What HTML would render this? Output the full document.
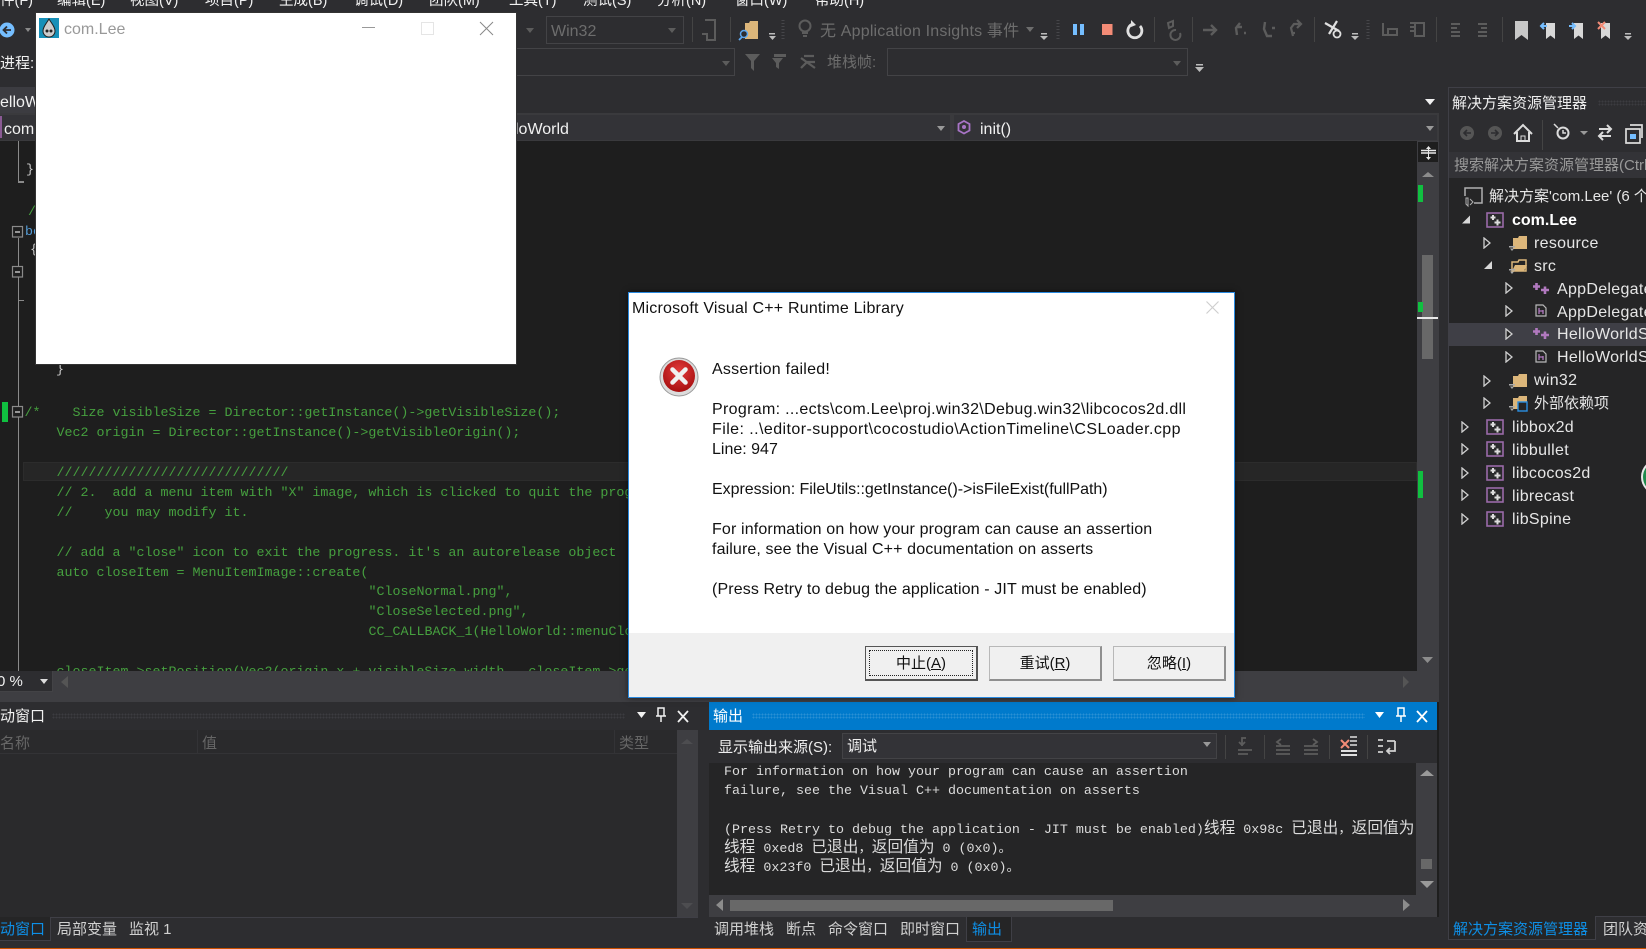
<!DOCTYPE html>
<html lang="zh"><head><meta charset="utf-8"><title>com.Lee</title>
<style>
html,body{margin:0;padding:0;background:#2d2d30;}
body{position:relative;width:1646px;height:949px;overflow:hidden;font-family:"Liberation Sans","Noto Sans CJK SC",sans-serif;color:#f1f1f1;font-size:16px;}
.a{position:absolute;}
.t{position:absolute;white-space:nowrap;line-height:20px;height:20px;}
.m{font-size:14.5px;}
.g{color:#6d6d6d;}
.code{position:absolute;left:24.5px;white-space:pre;font-family:"Liberation Mono","Noto Sans CJK SC",monospace;font-size:13.33px;line-height:20px;color:#46a03f;}
.out{position:absolute;left:724px;white-space:pre;font-family:"Liberation Mono","Noto Sans CJK SC",monospace;font-size:13.33px;line-height:19px;height:19px;color:#dcdcdc;}
.out b{font-weight:normal;font-family:"Noto Sans CJK SC",sans-serif;font-size:15.7px;line-height:1;}
.tr{position:absolute;white-space:nowrap;line-height:22px;height:22px;color:#e6e6e6;font-size:16px;letter-spacing:.3px;}
.dl{position:absolute;left:83px;white-space:nowrap;line-height:20px;color:#111;font-size:16px;}
.btn{position:absolute;top:353px;width:113px;height:35px;box-sizing:border-box;background:#f0f0f0;border:1px solid #b8b8b8;border-right:2px solid #8f8f8f;border-bottom:2px solid #8f8f8f;text-align:center;line-height:33px;color:#111;font-size:15px;}
</style></head><body>

<!-- menu -->
<div class="t m" style="left:0;top:-9px">件(F)</div>
<div class="t m" style="left:57px;top:-9px">编辑(E)</div>
<div class="t m" style="left:130px;top:-9px">视图(V)</div>
<div class="t m" style="left:205px;top:-9px">项目(P)</div>
<div class="t m" style="left:279px;top:-9px">生成(B)</div>
<div class="t m" style="left:354px;top:-9px">调试(D)</div>
<div class="t m" style="left:429px;top:-9px">团队(M)</div>
<div class="t m" style="left:509px;top:-9px">工具(T)</div>
<div class="t m" style="left:583px;top:-9px">测试(S)</div>
<div class="t m" style="left:657px;top:-9px">分析(N)</div>
<div class="t m" style="left:735px;top:-9px">窗口(W)</div>
<div class="t m" style="left:815px;top:-9px">帮助(H)</div>

<!-- toolbar -->
<div class="a" style="left:546px;top:16px;width:136px;height:26px;border:1px solid #434346"></div>
<div class="t g" style="left:551px;top:22px;">Win32</div>
<div class="t g" style="left:820px;top:22px;font-size:16px;letter-spacing:.18px">无 Application Insights 事件</div>
<div class="t" style="left:0;top:54px;color:#f1f1f1;font-size:15px">进程:</div>
<div class="a" style="left:516px;top:48px;width:218px;height:26px;border:1px solid #434346;border-left:0"></div>
<div class="t g" style="left:827px;top:53px;font-size:15px">堆栈帧:</div>
<div class="a" style="left:887px;top:48px;width:299px;height:26px;border:1px solid #434346"></div>

<!-- tab row / nav -->
<div class="a" style="left:0;top:87px;width:36px;height:26px;background:#3c3c41"></div>
<div class="t" style="left:0;top:93px;">elloW</div>
<div class="a" style="left:0;top:113px;width:1439px;height:28px;background:#3a3a3d"></div>
<div class="a" style="left:0;top:115px;width:950px;height:25px;background:#333337"></div>
<div class="a" style="left:954px;top:115px;width:483px;height:25px;background:#333337"></div>
<div class="a" style="left:0;top:116px;width:2px;height:22px;background:#8a5a94"></div>
<div class="t" style="left:4px;top:120px;">com</div>
<div class="t" style="left:515px;top:120px;">loWorld</div>
<div class="t" style="left:980px;top:120px;">init()</div>

<!-- editor -->
<div class="a" style="left:0;top:141px;width:1417px;height:530px;background:#1e1e1e;overflow:hidden">
  <div class="a" style="left:23px;top:321px;width:1394px;height:19px;background:#262626;border:1px solid #2c2c2c;box-sizing:border-box"></div>
  <div class="a" style="left:17.5px;top:0;width:1.5px;height:41px;background:#8a8a8a"></div>
  <div class="a" style="left:17.5px;top:40px;width:6px;height:1.5px;background:#8a8a8a"></div>
  <div class="a" style="left:17.5px;top:97px;width:1.5px;height:433px;background:#8a8a8a"></div>
  <div class="a" style="left:17.5px;top:159px;width:6px;height:1px;background:#8a8a8a"></div>
  <div class="a" style="left:2px;top:261px;width:6px;height:20px;background:#10c040"></div>
  <div class="code" style="left:26px;top:20px;color:#c8c8c8">}</div>
  <div class="code" style="left:28px;top:62px;">//</div>
  <div class="code" style="left:25px;top:82px;color:#569cd6">bool</div>
  <div class="code" style="left:30px;top:100px;color:#c8c8c8">{</div>
  <div class="code" style="left:56px;top:220px;color:#c8c8c8">}</div>
  <div class="code" style="top:263px;">/*    Size visibleSize = Director::getInstance()-&gt;getVisibleSize();</div>
  <div class="code" style="top:283px;">    Vec2 origin = Director::getInstance()-&gt;getVisibleOrigin();</div>
  <div class="code" style="top:323px;">    /////////////////////////////</div>
  <div class="code" style="top:343px;">    // 2.  add a menu item with "X" image, which is clicked to quit the program.</div>
  <div class="code" style="top:363px;">    //    you may modify it.</div>
  <div class="code" style="top:403px;">    // add a "close" icon to exit the progress. it's an autorelease object</div>
  <div class="code" style="top:423px;">    auto closeItem = MenuItemImage::create(</div>
  <div class="code" style="left:368.500px;top:442px;">"CloseNormal.png",</div>
  <div class="code" style="left:368.500px;top:462px;">"CloseSelected.png",</div>
  <div class="code" style="left:368.500px;top:482px;">CC_CALLBACK_1(HelloWorld::menuCloseCallback, this));</div>
  <div class="code" style="top:522px;">    closeItem-&gt;setPosition(Vec2(origin.x + visibleSize.width - closeItem-&gt;getContentSize().width/2 ,</div>
</div>

<!-- editor vscroll -->
<div class="a" style="left:1417px;top:141px;width:22px;height:530px;background:#3e3e42"></div>
<div class="a" style="left:1418px;top:142px;width:20px;height:20px;background:#1e1e1e"></div>
<div class="a" style="left:1422px;top:255px;width:11px;height:104px;background:#686868"></div>
<div class="a" style="left:1418px;top:185px;width:5px;height:17px;background:#10c040"></div>
<div class="a" style="left:1418px;top:302px;width:5px;height:10px;background:#10c040"></div>
<div class="a" style="left:1418px;top:471px;width:5px;height:27px;background:#10c040"></div>
<div class="a" style="left:1417px;top:317px;width:21px;height:2px;background:#e8e8e8"></div>

<!-- editor hscroll -->
<div class="a" style="left:0;top:671px;width:1439px;height:31px;background:#3e3e42"></div>
<div class="a" style="left:0;top:671px;width:52px;height:20px;background:#2d2d30;border-right:1px solid #434346;border-bottom:1px solid #434346"></div>
<div class="t" style="left:-3px;top:672px;font-size:15px">0 %</div>

<!-- left bottom panel -->
<div class="t" style="left:0;top:707px;font-size:15px">动窗口</div>
<div class="a" style="left:52px;top:713px;width:573px;height:6px;background-image:radial-gradient(#3c3c40 1px,transparent 1px);background-size:3px 3px"></div>
<div class="a" style="left:0;top:730px;width:677px;height:187px;background:#2a2a2c"></div>
<div class="a" style="left:0;top:753px;width:677px;height:1px;background:#333336"></div>
<div class="a" style="left:197px;top:730px;width:1px;height:24px;background:#333336"></div>
<div class="a" style="left:614px;top:730px;width:1px;height:24px;background:#333336"></div>
<div class="t" style="left:0;top:734px;color:#666;font-size:15px">名称</div>
<div class="t" style="left:202px;top:734px;color:#666;font-size:15px">值</div>
<div class="t" style="left:619px;top:734px;color:#666;font-size:15px">类型</div>
<div class="a" style="left:677px;top:730px;width:21px;height:187px;background:#3e3e42"></div>
<div class="a" style="left:0;top:917px;width:50px;height:23px;background:#252526;border-right:1px solid #3f3f46;border-bottom:1px solid #3f3f46"></div>
<div class="a" style="left:50px;top:917px;width:648px;height:1px;background:#3f3f46"></div>
<div class="t" style="left:0;top:920px;color:#0e8fe6;font-size:15px">动窗口</div>
<div class="t" style="left:57px;top:920px;color:#d0d0d0;font-size:15px">局部变量</div>
<div class="t" style="left:129px;top:920px;color:#d0d0d0;font-size:15px">监视 1</div>

<!-- output panel -->
<div class="a" style="left:709px;top:702px;width:728px;height:28px;background:#007acc"></div>
<div class="t" style="left:713px;top:707px;font-size:15px;color:#fff">输出</div>
<div class="a" style="left:752px;top:713px;width:613px;height:6px;background-image:radial-gradient(#2a90d4 1px,transparent 1px);background-size:3px 3px"></div>
<div class="t" style="left:718px;top:738px;font-size:15px;color:#eee">显示输出来源(S):</div>
<div class="a" style="left:842px;top:733px;width:373px;height:24px;background:#333337;border:1px solid #434346"></div>
<div class="t" style="left:847px;top:737px;font-size:15px;color:#eee">调试</div>
<div class="a" style="left:709px;top:763px;width:707px;height:132px;background:#252526;overflow:hidden">
  <div class="out" style="left:15px;top:0;">For information on how your program can cause an assertion</div>
  <div class="out" style="left:15px;top:19px;">failure, see the Visual C++ documentation on asserts</div>
  <div class="out" style="left:15px;top:56px;">(Press Retry to debug the application - JIT must be enabled)<b>线程</b> 0x98c <b>已退出</b>，<b>返回值为</b></div>
  <div class="out" style="left:15px;top:75px;"><b>线程</b> 0xed8 <b>已退出</b>，<b>返回值为</b> 0 (0x0)。</div>
  <div class="out" style="left:15px;top:94px;"><b>线程</b> 0x23f0 <b>已退出</b>，<b>返回值为</b> 0 (0x0)。</div>
</div>
<div class="a" style="left:1416px;top:763px;width:21px;height:132px;background:#3e3e42"></div>
<div class="a" style="left:1421px;top:859px;width:11px;height:10px;background:#686868"></div>
<div class="a" style="left:709px;top:895px;width:728px;height:22px;background:#3e3e42"></div>
<div class="a" style="left:730px;top:900px;width:383px;height:11px;background:#686868"></div>
<div class="a" style="left:1437px;top:702px;width:2px;height:215px;background:#1e1e1e"></div>
<div class="a" style="left:966px;top:917px;width:44px;height:24px;background:#252526;border:1px solid #3f3f46;border-top:0"></div>
<div class="t" style="left:714px;top:920px;font-size:15px;color:#d0d0d0">调用堆栈</div>
<div class="t" style="left:786px;top:920px;font-size:15px;color:#d0d0d0">断点</div>
<div class="t" style="left:828px;top:920px;font-size:15px;color:#d0d0d0">命令窗口</div>
<div class="t" style="left:900px;top:920px;font-size:15px;color:#d0d0d0">即时窗口</div>
<div class="t" style="left:972px;top:920px;font-size:15px;color:#0e8fe6">输出</div>

<!-- right panel -->
<div class="a" style="left:1448px;top:87px;width:198px;height:91px;background:#2d2d30;border-left:1px solid #3f3f46;border-top:1px solid #3f3f46;box-sizing:border-box"></div>
<div class="t" style="left:1452px;top:94px;font-size:15px;color:#eee">解决方案资源管理器</div>
<div class="a" style="left:1598px;top:100px;width:48px;height:6px;background-image:radial-gradient(#3c3c40 1px,transparent 1px);background-size:3px 3px"></div>
<div class="a" style="left:1449px;top:152px;width:197px;height:26px;background:#333337;overflow:hidden"><div class="t" style="left:5px;top:4px;color:#999;font-size:15px">搜索解决方案资源管理器(Ctrl+;)</div></div>
<div class="a" style="left:1448px;top:178px;width:198px;height:738px;background:#252526;border-left:1px solid #3f3f46;box-sizing:border-box"></div>
<div class="a" style="left:1449px;top:323px;width:197px;height:23px;background:#3f3f46"></div>
<div class="a" style="left:1448px;top:916px;width:148px;height:24px;background:#252526;border:1px solid #3f3f46;border-top:0;box-sizing:border-box"></div>
<div class="a" style="left:1596px;top:916px;width:50px;height:1px;background:#3f3f46"></div>
<div class="t" style="left:1453px;top:920px;font-size:15px;color:#0e8fe6">解决方案资源管理器</div>
<div class="t" style="left:1603px;top:920px;font-size:15px;color:#d0d0d0">团队资源管理器</div>

<div class="a" style="left:1449px;top:178px;width:197px;height:360px;overflow:hidden">
  <div class="tr" style="left:40px;top:8px;font-size:15px;letter-spacing:0">解决方案'com.Lee' (6 个项目)</div>
  <div class="tr" style="left:63px;top:32px;font-weight:bold;color:#fff;letter-spacing:0">com.Lee</div>
  <div class="tr" style="left:85px;top:55px;">resource</div>
  <div class="tr" style="left:85px;top:78px;">src</div>
  <div class="tr" style="left:108px;top:101px;">AppDelegate.cpp</div>
  <div class="tr" style="left:108px;top:124px;">AppDelegate.h</div>
  <div class="tr" style="left:108px;top:146px;">HelloWorldScene.cpp</div>
  <div class="tr" style="left:108px;top:169px;">HelloWorldScene.h</div>
  <div class="tr" style="left:85px;top:192px;">win32</div>
  <div class="tr" style="left:85px;top:215px;font-size:15px;letter-spacing:0">外部依赖项</div>
  <div class="tr" style="left:63px;top:239px;">libbox2d</div>
  <div class="tr" style="left:63px;top:262px;">libbullet</div>
  <div class="tr" style="left:63px;top:285px;">libcocos2d</div>
  <div class="tr" style="left:63px;top:308px;">librecast</div>
  <div class="tr" style="left:63px;top:331px;">libSpine</div>
</div>

<!-- status line -->
<div class="a" style="left:0;top:948px;width:1646px;height:1px;background:#ca5100"></div>

<!-- icons overlay -->
<svg class="a" style="left:0;top:0" width="1646" height="949" viewBox="0 0 1646 949">
<defs>
<symbol id="proj" viewBox="0 0 18 16"><rect x="1" y="1" width="16" height="14" fill="#2a2a2c" stroke="#9a6aa8" stroke-width="1.6"/><path d="M4.500 5.500h5M7 3v5M8.500 10.500h6M11.500 7.500v6" stroke="#ddd" stroke-width="2" fill="none"/></symbol>
<symbol id="fold" viewBox="0 0 18 16"><path d="M4 3h5l1-2h8v13H4z" fill="#dcb67a"/><path d="M0 11h6v1.500H0zM1 13.500h4L3 16z" fill="#aaa"/></symbol>
<symbol id="foldo" viewBox="0 0 18 16"><path d="M3 4h6l1-2h7v11H3z" fill="none" stroke="#dcb67a" stroke-width="1.500"/><path d="M3 13l3-6h12l-3 6z" fill="#dcb67a"/><path d="M0 11h6v1.500H0zM1 13.500h4L3 16z" fill="#aaa"/></symbol>
<symbol id="tri" viewBox="0 0 8 12"><path d="M1 1l6 5-6 5z" fill="#252526" stroke="#d0d0d0" stroke-width="1.300"/></symbol>
<symbol id="cpp" viewBox="0 0 16 12"><path d="M0 3.500h7M3.500 0v7M8 7h8M12 3.500v7.500" stroke="#b179bf" stroke-width="2.600" fill="none"/></symbol>
<symbol id="hdr" viewBox="0 0 12 13"><path d="M1 1h7l3 3v8H1z" fill="none" stroke="#b9b9b9" stroke-width="1.200"/><path d="M4 4v6M8 6v4M4 7h4" stroke="#b179bf" stroke-width="1.300" fill="none"/></symbol>
</defs>

<!-- toolbar row 1 -->
<circle cx="7" cy="30" r="7.500" fill="#75beff"/><path d="M11 30H4m3-3.500L3.500 30 7 33.500" stroke="#2d2d30" stroke-width="1.800" fill="none"/>
<path d="M25 28h6l-3 4z" fill="#8a8a8a"/>
<path d="M526 28h8l-4 5zM668 28h8l-4 5z" fill="#5c5c5c"/>
<path d="M692.500 17v25M730.500 17v25" stroke="#444" />
<path d="M705 20h10v20h-8v-6h-5" fill="none" stroke="#5c5c5c" stroke-width="2"/>
<path d="M745 23h4l1-2h8v18h-13z" fill="#dcb67a"/><circle cx="744" cy="34" r="3.500" fill="#2d2d30" stroke="#5ea8ef" stroke-width="1.500"/><path d="M742 37l-3 3" stroke="#5ea8ef" stroke-width="1.800"/>
<path d="M769 33h6v1.500h-6zM769 36h7l-3.500 4z" fill="#bcbcbc"/>
<path d="M783 20v19" stroke="#46464a" stroke-width="3" stroke-dasharray="1 2"/>
<circle cx="805" cy="26" r="5.500" fill="none" stroke="#5c5c5c" stroke-width="2"/><path d="M802 33h6M803 36h4" stroke="#5c5c5c" stroke-width="2"/>
<path d="M1026 27h8l-4 5z" fill="#6d6d6d"/>
<path d="M1041 33h6v1.500h-6zM1040 36h8l-4 4z" fill="#bcbcbc"/>
<path d="M1058 20v19" stroke="#46464a" stroke-width="3" stroke-dasharray="1 2"/>
<path d="M1073 24h4v11h-4zM1080 24h4v11h-4z" fill="#75beff"/>
<rect x="1102" y="24" width="10.500" height="11" fill="#f38b76"/>
<path d="M1133 24a7 7 0 1 0 7 2" fill="none" stroke="#e0e0e0" stroke-width="2.800"/><path d="M1131 20l5 5-5 2z" fill="#e0e0e0"/>
<path d="M1154.500 17v25M1192.500 17v25M1314.500 17v25M1436.500 17v25M1502.500 17v25" stroke="#444"/>
<path d="M1168 23l5-2 0 5-4 2zM1176 30a5 5 0 1 0 4 3" fill="none" stroke="#5c5c5c" stroke-width="2"/>
<path d="M1203 30h13m-5-5 5 5-5 5" stroke="#5c5c5c" stroke-width="2.400" fill="none"/>
<path d="M1240 23l-4 5 1 7M1244 33h2M1236 27h6" stroke="#5c5c5c" stroke-width="2.400" fill="none"/>
<path d="M1265 22l-1 7 3 7h5M1272 28h3" stroke="#5c5c5c" stroke-width="2.400" fill="none"/>
<path d="M1300 24h-6l-3 4 2 8M1293 33h2M1297 20l4 4-4 4" stroke="#5c5c5c" stroke-width="2.200" fill="none"/>
<path d="M1325 23l14 8M1337 21l-8 13" stroke="#e0e0e0" stroke-width="2.200"/><circle cx="1337" cy="34" r="3.500" fill="none" stroke="#e0e0e0" stroke-width="1.800"/>
<path d="M1352 33h6v1.500h-6zM1351 36h8l-4 4z" fill="#bcbcbc"/>
<path d="M1368 20v19" stroke="#46464a" stroke-width="3" stroke-dasharray="1 2"/>
<path d="M1383 23v12h14v-6h-9v6" fill="none" stroke="#5c5c5c" stroke-width="2"/>
<path d="M1410 23h14v13h-9v-13M1410 27h4M1410 31h4" fill="none" stroke="#5c5c5c" stroke-width="2"/>
<path d="M1451 24h9M1451 28h6M1451 32h9M1451 36h9" stroke="#5c5c5c" stroke-width="2"/>
<path d="M1478 24h9M1481 28h6M1478 32h9M1478 36h9" stroke="#5c5c5c" stroke-width="2"/>
<path d="M1515 21h13v19l-6.500-5-6.500 5z" fill="#c8c8c8"/>
<path d="M1546 23h9v16l-4.500-3.500-4.500 3.500z" fill="#d8d8d8"/><path d="M1541 26h6m-3-3-3 3 3 3" stroke="#75beff" stroke-width="2" fill="none"/>
<path d="M1574 23h9v16l-4.500-3.500-4.500 3.500z" fill="#d8d8d8"/><path d="M1569 26h6m-3-3 3 3-3 3" stroke="#75beff" stroke-width="2" fill="none"/>
<path d="M1601 23h9v16l-4.500-3.500-4.500 3.500z" fill="#d8d8d8"/><path d="M1598 22l7 7m0-7l-7 7" stroke="#f38b76" stroke-width="2"/>
<path d="M1625 33h6v1.500h-6zM1624 36h8l-4 4z" fill="#bcbcbc"/>

<!-- toolbar row 2 -->
<path d="M722 61h8l-4 5zM1173 61h8l-4 5z" fill="#5c5c5c"/>
<path d="M745 54h15l-6 7v10l-3-3v-7z" fill="#5c5c5c"/>
<path d="M772 58h11l-4 5v6l-3-2v-4zM774 54h12v3h-12z" fill="#5c5c5c"/>
<path d="M801 58l14 10M801 68l6-6h8M804 56h10" stroke="#5c5c5c" stroke-width="2.200" fill="none"/>
<path d="M1196 64h7v1.500h-7zM1195 67h9l-4.500 5z" fill="#bcbcbc"/>
<path d="M1425 99h10l-5 6z" fill="#f1f1f1"/>
<!-- nav -->
<path d="M937 126h8l-4 5zM1426 126h8l-4 5z" fill="#999"/>
<path d="M964 121l5.500 3v6.500l-5.500 3-5.500-3V124z" fill="none" stroke="#a874c6" stroke-width="1.800"/><circle cx="964" cy="127" r="2" fill="#a874c6"/>

<!-- outline boxes -->
<g fill="#1e1e1e" stroke="#8a8a8a" stroke-width="1.200"><rect x="12.500" y="226.500" width="10" height="10.500"/><rect x="12.500" y="266.500" width="10" height="10.500"/><rect x="12.500" y="406.500" width="10" height="10.500"/></g>
<path d="M15 232h5M15 272h5M15 412h5" stroke="#ddd" stroke-width="1.300"/>

<!-- split button + scroll arrows -->
<path d="M1421 150.500h15M1421 153h15" stroke="#e8e8e8" stroke-width="1.500"/><path d="M1428.500 146l-2.500 3h5zM1428.500 160l-2.500-3h5z" fill="#e8e8e8"/><path d="M1428.500 147v12" stroke="#e8e8e8"/>
<path d="M1422 177l6-5 6 5z" fill="#8c8c8c"/><path d="M1422 657h11l-5.500 6z" fill="#8c8c8c"/>
<path d="M1403 676l6 6-6 6z" fill="#555"/><path d="M68 676l-7 6 7 6z" fill="#555"/>
<path d="M40 679h8l-4 5z" fill="#ddd"/>

<!-- left panel icons -->
<path d="M637 712h9l-4.500 6z" fill="#f1f1f1"/>
<path d="M658 708h6v8h-6zM656 716h10M661 716v6" stroke="#f1f1f1" stroke-width="1.500" fill="none"/>
<path d="M678 711l10 11m0-11l-10 11" stroke="#f1f1f1" stroke-width="1.800"/>
<path d="M681 744l6-5 6 5z" fill="#4d4d50"/><path d="M681 903h12l-6 6z" fill="#4d4d50"/>

<!-- output icons -->
<path d="M1375 712h9l-4.500 6z" fill="#fff"/>
<path d="M1398 708h6v8h-6zM1396 716h10M1401 716v6" stroke="#fff" stroke-width="1.500" fill="none"/>
<path d="M1417 711l10 11m0-11l-10 11" stroke="#fff" stroke-width="1.800"/>
<path d="M1203 742h8l-4 5z" fill="#999"/>
<path d="M1225.500 735v24M1264.500 735v24M1329.500 735v24M1367.500 735v24" stroke="#444"/>
<path d="M1238 750h14M1238 754h10M1246 738h-4v8M1239 742l3 3 3-3" stroke="#5c5c5c" stroke-width="1.800" fill="none"/>
<path d="M1276 746h14M1276 750h14M1276 754h14M1281 739l-4 3 4 3" stroke="#5c5c5c" stroke-width="1.800" fill="none"/>
<path d="M1304 746h14M1304 750h14M1304 754h14M1313 739l4 3-4 3" stroke="#5c5c5c" stroke-width="1.800" fill="none"/>
<path d="M1341 740l8 8m0-8l-8 8" stroke="#f38b76" stroke-width="2"/><path d="M1341 751h16M1341 755h16" stroke="#e0e0e0" stroke-width="2"/><path d="M1350 737h7M1350 741h7M1350 745h7" stroke="#e0e0e0" stroke-width="1.500"/>
<path d="M1378 740h5M1378 746h5M1378 752h5M1395 741v10h-8m3-3-3 3 3 3M1387 741h8" stroke="#d0d0d0" stroke-width="1.800" fill="none"/>
<path d="M1420 776l7-6 7 6zM1420 881h14l-7 7z" fill="#9a9a9a"/>
<path d="M723 899l-7 6 7 6z" fill="#8c8c8c"/><path d="M1403 899l7 6-7 6z" fill="#8c8c8c"/>

<!-- solution toolbar -->
<circle cx="1467" cy="133" r="7" fill="#555"/><path d="M1471 133h-7m3-3-3 3 3 3" stroke="#2d2d30" stroke-width="1.600" fill="none"/>
<circle cx="1495" cy="133" r="7" fill="#555"/><path d="M1491 133h7m-3-3 3 3-3 3" stroke="#2d2d30" stroke-width="1.600" fill="none"/>
<path d="M1514 134l9-9 9 9M1517 132v9h12v-9" fill="none" stroke="#dcdcdc" stroke-width="2"/><path d="M1521 141v-5h4v5" stroke="#dcdcdc" fill="none"/>
<path d="M1542.500 120v30" stroke="#444"/>
<circle cx="1563" cy="133" r="5.500" fill="none" stroke="#dcdcdc" stroke-width="2"/><path d="M1563 130v3h3M1554 124l4 4" stroke="#dcdcdc" stroke-width="1.500" fill="none"/>
<path d="M1580 131h8l-4 4z" fill="#999"/>
<path d="M1599 130h12m-4-4 4 4-4 4M1611 137h-12m4-4-4 4 4 4" stroke="#dcdcdc" stroke-width="2" fill="none" transform="translate(0 -1)"/>
<path d="M1626 129h14v14h-14zM1630 125h12v13" fill="none" stroke="#dcdcdc" stroke-width="1.700"/><rect x="1630" y="134" width="6" height="5" fill="#75beff"/>

<!-- tree -->
<path d="M1465 196v-8h17v15h-8" fill="none" stroke="#b0b0b0" stroke-width="1.500"/><path d="M1466 198v6l2 2v-8zM1470 199l3 3-3 3" stroke="#b0b0b0" fill="none"/>
<path d="M1462 223.500l8-8v8z" fill="#d8d8d8"/>
<use href="#proj" x="1486" y="212" width="18" height="16"/>
<use href="#tri" x="1483" y="237" width="8" height="12"/>
<use href="#fold" x="1509" y="235" width="18" height="16"/>
<path d="M1484 269l8-8v8z" fill="#d8d8d8"/>
<use href="#foldo" x="1509" y="258" width="18" height="16"/>
<use href="#tri" x="1505" y="282" width="8" height="12"/>
<use href="#cpp" x="1533" y="283" width="16" height="12"/>
<use href="#tri" x="1505" y="305" width="8" height="12"/>
<use href="#hdr" x="1535" y="304" width="12" height="13"/>
<use href="#tri" x="1505" y="328" width="8" height="12"/>
<use href="#cpp" x="1533" y="328" width="16" height="12"/>
<use href="#tri" x="1505" y="351" width="8" height="12"/>
<use href="#hdr" x="1535" y="350" width="12" height="13"/>
<use href="#tri" x="1483" y="375" width="8" height="12"/>
<use href="#fold" x="1509" y="373" width="18" height="16"/>
<use href="#tri" x="1483" y="397" width="8" height="12"/>
<use href="#fold" x="1509" y="395" width="18" height="16"/>
<rect x="1518" y="402" width="9" height="9" fill="#252526" stroke="#2a8ee0" stroke-width="1.400"/>
<use href="#tri" x="1461" y="421" width="8" height="12"/><use href="#proj" x="1486" y="419" width="18" height="16"/>
<use href="#tri" x="1461" y="443" width="8" height="12"/><use href="#proj" x="1486" y="441" width="18" height="16"/>
<use href="#tri" x="1461" y="467" width="8" height="12"/><use href="#proj" x="1486" y="465" width="18" height="16"/>
<use href="#tri" x="1461" y="489" width="8" height="12"/><use href="#proj" x="1486" y="487" width="18" height="16"/>
<use href="#tri" x="1461" y="513" width="8" height="12"/><use href="#proj" x="1486" y="511" width="18" height="16"/>
<circle cx="1659" cy="477" r="17" fill="#1f8a4c" stroke="#e8e8e8" stroke-width="2"/>
</svg>

<!-- app window -->
<div class="a" style="left:36px;top:13px;width:480px;height:351px;background:#fff;box-shadow:0 0 0 1px #333">
  <svg class="a" style="left:3px;top:5px" width="20" height="20" viewBox="0 0 20 20"><rect width="20" height="20" fill="#1790b8"/><path d="M10 1c3 5 6 8 6 12a6 6 0 0 1-12 0c0-4 3-7 6-12z" fill="#ccc" stroke="#222"/><circle cx="8" cy="13" r="1.500" fill="#222"/><circle cx="12" cy="13" r="1.500" fill="#222"/></svg>
  <div class="t" style="left:28px;top:7px;color:#999;font-size:16px">com.Lee</div>
  <svg class="a" style="left:0;top:0" width="480" height="40"><path d="M326 14.500h13" stroke="#999"/><rect x="385.500" y="9.500" width="12" height="12" fill="none" stroke="#e5e5e5"/><path d="M444 9l13 13m0-13l-13 13" stroke="#888" stroke-width="1"/></svg>
</div>

<!-- dialog -->
<div class="a" style="left:628px;top:292px;width:607px;height:406px;box-sizing:border-box;background:#fff;border:1px solid #2a8ae0;box-shadow:0 0 6px rgba(0,0,0,.5)">
  <div class="t" style="left:3px;top:6px;color:#111;font-size:16px;letter-spacing:.2px">Microsoft Visual C++ Runtime Library</div>
  <svg class="a" style="left:0;top:0" width="605" height="120"><path d="M577.500 8.500l12 12m0-12l-12 12" stroke="#cfcfcf" stroke-width="1.200"/>
    <defs><radialGradient id="rg" cx="50%" cy="35%" r="65%"><stop offset="0" stop-color="#e23c3c"/><stop offset="1" stop-color="#a80f10"/></radialGradient></defs>
    <circle cx="50" cy="84" r="19" fill="#dcdcdc" stroke="#9a9a9a"/><circle cx="50" cy="83" r="16" fill="url(#rg)"/>
    <path d="M43.500 76.500l13 13m0-13l-13 13" stroke="#f0f0f0" stroke-width="4.500" stroke-linecap="round"/></svg>
  <div class="dl" style="top:67px;letter-spacing:.25px">Assertion failed!</div>
  <div class="dl" style="top:107px;letter-spacing:.32px">Program: ...ects\com.Lee\proj.win32\Debug.win32\libcocos2d.dll</div>
  <div class="dl" style="top:127px;letter-spacing:.43px">File: ..\editor-support\cocostudio\ActionTimeline\CSLoader.cpp</div>
  <div class="dl" style="top:147px;">Line: 947</div>
  <div class="dl" style="top:187px;letter-spacing:-.04px">Expression: FileUtils::getInstance()-&gt;isFileExist(fullPath)</div>
  <div class="dl" style="top:227px;letter-spacing:.14px">For information on how your program can cause an assertion</div>
  <div class="dl" style="top:247px;letter-spacing:.12px">failure, see the Visual C++ documentation on asserts</div>
  <div class="dl" style="top:287px;letter-spacing:.12px">(Press Retry to debug the application - JIT must be enabled)</div>
  <div class="a" style="left:0;top:340px;width:605px;height:64px;background:#f0f0f0"></div>
  <div class="btn" style="left:236px;border-color:#555;border-right-color:#555;border-bottom-color:#555"><div class="a" style="left:3px;top:3px;right:3px;bottom:3px;border:1px dotted #222;line-height:25px">中止(<u>A</u>)</div></div>
  <div class="btn" style="left:360px">重试(<u>R</u>)</div>
  <div class="btn" style="left:484px">忽略(<u>I</u>)</div>
</div>
</body></html>
